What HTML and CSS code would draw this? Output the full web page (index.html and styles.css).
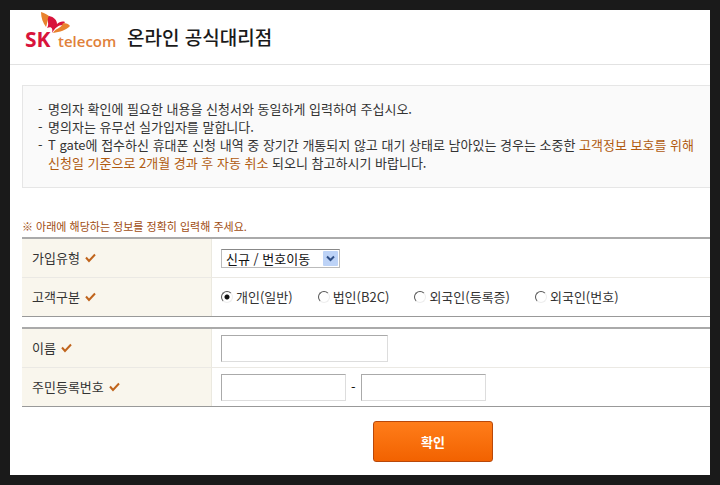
FILE: index.html
```html
<!DOCTYPE html>
<html lang="ko">
<head>
    <meta charset="UTF-8">
    <meta name="viewport" content="width=device-width, initial-scale=1.0">
    <title>SK telecom 온라인 공식대리점</title>
    <link rel="stylesheet" href="styles.css">
</head>
<body>
    <header class="header">
        <svg class="logo" width="96" height="44" viewBox="0 0 96 44" role="img" aria-label="SK telecom">
            <!-- wings -->
            <path fill="#e8822e" d="M17 2 C21 3 24 5 26 7 C23 9 24 12 22 17 C19 13 17 8 17 2Z"/>
            <path fill="#d8143c" d="M25 6 C30 7 33 10 33 14 C35 12 38 11 41 12 L39 15 C34 15 31 18 28 23 C29 19 28 16 23 18 C26 14 22 10 25 6Z"/>
            <path fill="#e8822e" d="M39 13 C42 13 45 14 46 16 C42 20 36 22 29 23 C31 18 37 19 39 13Z"/>
            <text class="logo-sk" x="1" y="37">SK</text>
            <text class="logo-telecom" x="34" y="37">telecom</text>
        </svg>
        <h1 class="title">온라인 공식대리점</h1>
    </header>

    <main class="content">
        <ul class="notice">
            <li>명의자 확인에 필요한 내용을 신청서와 동일하게 입력하여 주십시오.</li>
            <li>명의자는 유무선 실가입자를 말합니다.</li>
            <li>T gate에 접수하신 휴대폰 신청 내역 중 장기간 개통되지 않고 대기 상태로 남아있는 경우는 소중한 <em>고객정보 보호를 위해<br>신청일 기준으로 2개월 경과 후 자동 취소</em> 되오니 참고하시기 바랍니다.</li>
        </ul>

        <form id="joinForm">
            <p class="guide">※ 아래에 해당하는 정보를 정확히 입력해 주세요.</p>

            <div class="group">
                <div class="row">
                    <label class="name" for="joinType">가입유형
                        <svg class="check" width="11" height="10" viewBox="0 0 11 10"><path d="M1 4.5 L4 8 L10 1.5"/></svg>
                    </label>
                    <div class="field">
                        <div class="select">
                            <select id="joinType" name="joinType">
                                <option>신규 / 번호이동</option>
                            </select>
                            <svg class="arrow" width="15" height="15" viewBox="0 0 15 15"><rect width="15" height="15" rx="1"/><path d="M4 5.5 L7.5 9 L11 5.5"/></svg>
                        </div>
                    </div>
                </div>
                <div class="row" role="radiogroup" aria-labelledby="customerName">
                    <div class="name" id="customerName">고객구분
                        <svg class="check" width="11" height="10" viewBox="0 0 11 10"><path d="M1 4.5 L4 8 L10 1.5"/></svg>
                    </div>
                    <div class="field radios">
                        <label><input type="radio" name="customer" value="1" checked>개인(일반)</label>
                        <label><input type="radio" name="customer" value="2">법인(B2C)</label>
                        <label><input type="radio" name="customer" value="3">외국인(등록증)</label>
                        <label><input type="radio" name="customer" value="4">외국인(번호)</label>
                    </div>
                </div>
            </div>

            <div class="group">
                <div class="row">
                    <label class="name" for="userName">이름
                        <svg class="check" width="11" height="10" viewBox="0 0 11 10"><path d="M1 4.5 L4 8 L10 1.5"/></svg>
                    </label>
                    <div class="field">
                        <input class="text text-long" type="text" id="userName" name="userName">
                    </div>
                </div>
                <div class="row">
                    <label class="name" for="jumin1">주민등록번호
                        <svg class="check" width="11" height="10" viewBox="0 0 11 10"><path d="M1 4.5 L4 8 L10 1.5"/></svg>
                    </label>
                    <div class="field">
                        <input class="text" type="text" id="jumin1" name="jumin1">
                        <span class="dash">-</span>
                        <input class="text" type="text" id="jumin2" name="jumin2" aria-label="주민등록번호 뒷자리">
                    </div>
                </div>
            </div>

            <div class="buttons">
                <button type="submit">확인</button>
            </div>
        </form>
    </main>
</body>
</html>
```

FILE: styles.css
```css
* {
    box-sizing: border-box;
}
body {
    margin: 0;
    min-height: 100vh;
    border: 10px solid #1a1a1a;
    background: #fff;
    color: #333;
    font-family: "Noto Sans CJK KR", sans-serif;
    font-size: 13px;
    line-height: 18px;
}

/* header */
.header {
    display: flex;
    align-items: center;
    gap: 7px;
    height: 55px;
    padding-left: 14px;
    border-bottom: 1px solid #e2e2e2;
}
.logo {
    align-self: flex-start;
}
.logo-sk {
    fill: #d8143c;
    font: bold 21px "Open Sans", sans-serif;
}
.logo-telecom {
    fill: #e0813a;
    font: 600 15px "Open Sans", sans-serif;
}
.title {
    margin: 0;
    color: #1a1a1a;
    font-size: 19px;
    font-weight: 500;
    line-height: 28px;
}

.content {
    padding: 20px 0 0 12px;
}

/* notice box */
.notice {
    margin: 0 0 29px;
    padding: 14px 0 15px 25px;
    border: 1px solid #e6e6e6;
    border-width: 1px 0 1px 1px;
    background: #fafafa;
    list-style: none;
    white-space: nowrap;
}
.notice li::before {
    content: "-";
    display: inline-block;
    width: 10px;
    margin-left: -10px;
}
.notice em {
    color: #b05a10;
    font-style: normal;
}

/* form */
.guide {
    margin: 0 0 2px;
    color: #a04c10;
    font-size: 11px;
}
.group {
    margin-bottom: 10px;
    border-top: 2px solid #aaa;
    border-bottom: 1px solid #999;
}
.row {
    display: flex;
    height: 38px;
}
.row + .row {
    height: 39px;
    border-top: 1px solid #ebe9e4;
}
.name {
    display: flex;
    align-items: center;
    gap: 5px;
    width: 190px;
    padding-left: 10px;
    border-right: 1px solid #ebe9e0;
    background: #f9f6ed;
}
.check path {
    fill: none;
    stroke: #c0641c;
    stroke-width: 2;
}
.field {
    display: flex;
    flex: 1;
    align-items: center;
    gap: 5px;
    padding-left: 9px;
}

.select {
    position: relative;
}
select {
    display: block;
    appearance: none;
    width: 119px;
    height: 19px;
    padding: 0 0 0 4px;
    border: 1px solid #bbb;
    border-top-color: #888;
    border-radius: 0;
    background: #fff;
    color: #111;
    font: inherit;
    line-height: 17px;
}
.arrow {
    position: absolute;
    top: 2px;
    right: 2px;
    pointer-events: none;
}
.arrow rect {
    fill: #bdd3f7;
}
.arrow path {
    fill: none;
    stroke: #2f4f86;
    stroke-width: 2;
}

.radios {
    gap: 25px;
}
.radios label {
    display: flex;
    align-items: center;
    gap: 3px;
}
input[type="radio"] {
    appearance: none;
    width: 12px;
    height: 12px;
    margin: 0;
    border: 1px solid #eee;
    border-top-color: #555;
    border-left-color: #555;
    border-radius: 50%;
}
input[type="radio"]:checked {
    background: radial-gradient(circle, #111 2px, #fff 3px);
}

.text {
    width: 125px;
    height: 27px;
    padding: 0 4px;
    border: 1px solid #ddd;
    border-top-color: #aaa;
    border-left-color: #aaa;
    font: inherit;
}
.text-long {
    width: 167px;
}
.dash {
    color: #111;
}

.buttons {
    padding: 4px 0 13px 351px;
}
button {
    display: block;
    width: 120px;
    height: 41px;
    padding: 0;
    border: 1px solid #b8480a;
    border-radius: 3px;
    background: linear-gradient(#ff7d1a, #f26200);
    color: #fff;
    font: inherit;
    font-weight: bold;
    cursor: pointer;
}
```
